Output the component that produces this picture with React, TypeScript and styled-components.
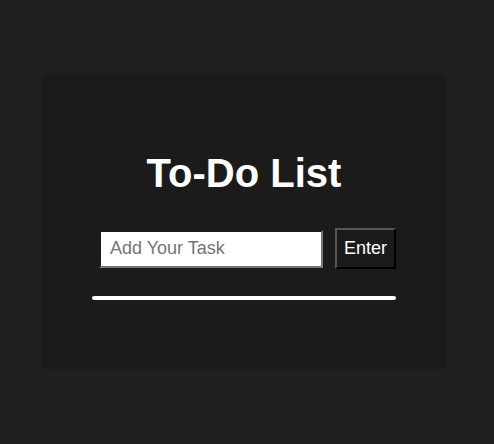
import { useState } from "react";
import styled, { createGlobalStyle } from "styled-components";

const GlobalStyle = createGlobalStyle`
  html, body {
    margin: 0;
    padding: 0;
    background: #1f1f1f;
    font-family: "Liberation Sans", Arial, sans-serif;
  }
`;

const Page = styled.div`
  min-height: 444px;
  padding: 74px 0 0 42px;
  box-sizing: border-box;
`;

const Card = styled.div`
  width: 404px;
  height: 295px;
  background: #1b1b1b;
  border-radius: 6px;
  box-sizing: border-box;
  padding-top: 76px;
  display: flex;
  flex-direction: column;
  align-items: center;
`;

const Title = styled.h1`
  margin: 0;
  color: #ffffff;
  font-size: 40px;
  font-weight: bold;
  line-height: 46px;
`;

const Body = styled.div`
  width: 304px;
  margin-top: 32px;
  display: flex;
  flex-direction: column;
`;

const Row = styled.div`
  display: flex;
  align-items: center;
  gap: 12px;
  padding-left: 7px;
`;

const TaskInput = styled.input`
  width: 224px;
  height: 38px;
  box-sizing: border-box;
  padding: 0 9px;
  font-family: "Liberation Sans", Arial, sans-serif;
  font-size: 18px;
  color: #222;
  background: #ffffff;
  border: 2px solid;
  border-color: #1b1b1b #767676 #767676 #1b1b1b;
  outline: none;

  &::placeholder {
    color: #757575;
  }
`;

const EnterButton = styled.button`
  width: 62px;
  height: 41px;
  box-sizing: border-box;
  padding: 0;
  font-family: "Liberation Sans", Arial, sans-serif;
  font-size: 18px;
  color: #ffffff;
  background: #1b1b1b;
  border: 2px solid;
  border-color: #555555 #000000 #000000 #555555;
  cursor: pointer;
`;

const Divider = styled.div`
  height: 4px;
  margin-top: 27px;
  background: #ffffff;
  border-radius: 2px;
`;

export default function App() {
  const [task, setTask] = useState("");

  return (
    <>
      <GlobalStyle />
      <Page>
        <Card>
          <Title>To-Do List</Title>
          <Body>
            <Row>
              <TaskInput
                placeholder="Add Your Task"
                value={task}
                onChange={(e) => setTask(e.target.value)}
              />
              <EnterButton>Enter</EnterButton>
            </Row>
            <Divider />
          </Body>
        </Card>
      </Page>
    </>
  );
}
